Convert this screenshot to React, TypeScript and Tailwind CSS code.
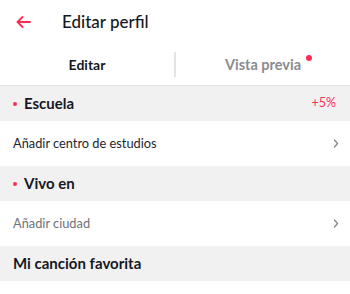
function Chevron() {
  return (
    <svg width="6" height="9" viewBox="0 0 6 9" className="ml-auto mr-[-2px]" fill="none" stroke="#8a8b91" strokeWidth="1.4" strokeLinecap="round" strokeLinejoin="round">
      <path d="M1.5 1l3 3.5-3 3.5" />
    </svg>
  )
}

function SectionHeader({ title, dot, extra }: { title: string; dot?: boolean; extra?: string }) {
  return (
    <div className="h-[35px] bg-[#f1f1f2] flex items-center px-[13px]">
      {dot && <span className="w-[4px] h-[4px] rounded-full bg-[#fe2c55] mr-[7px]" />}
      <span className="text-[15px] font-bold text-[#161823]">{title}</span>
      {extra && <span className="ml-auto text-[12.5px] text-[#fe2c55] mr-[1px]">{extra}</span>}
    </div>
  )
}

function Row({ label, muted }: { label: string; muted?: boolean }) {
  return (
    <div className="h-[45px] bg-white flex items-center px-[13px]">
      <span className={muted ? 'text-[12.8px] text-[#6f7179]' : 'text-[12.8px] text-[#24252d]'}>{label}</span>
      <Chevron />
    </div>
  )
}

export default function App() {
  return (
    <div className="w-[350px] h-[294px] bg-white overflow-hidden" style={{ fontFamily: 'Lato, "Noto Sans", sans-serif' }}>
      <div className="h-[44px] flex items-center">
        <svg width="15" height="12" viewBox="0 0 15 12" className="ml-[16px]" fill="none" stroke="#fe2c55" strokeWidth="1.8" strokeLinecap="round" strokeLinejoin="round">
          <path d="M14 6H1.5M6.5 1L1.5 6l5 5" />
        </svg>
        <span className="ml-[31px] text-[17px] font-medium text-[#161823]">Editar perfil</span>
      </div>
      <div className="h-[42px] flex items-center border-b border-[#e3e3e4]">
        <div className="flex-1 flex justify-center">
          <span className="text-[14px] font-bold text-[#161823]">Editar</span>
        </div>
        <div className="w-[2px] h-[25px] bg-[#e3e3e4]" />
        <div className="flex-1 flex justify-center">
          <span className="relative text-[14.5px] font-bold text-[#8a8b91]">
            Vista previa
            <span className="absolute -right-[11px] top-[1px] w-[6px] h-[6px] rounded-full bg-[#fe2c55]" />
          </span>
        </div>
      </div>
      <SectionHeader title="Escuela" dot extra="+5%" />
      <Row label="Añadir centro de estudios" />
      <SectionHeader title="Vivo en" dot />
      <Row label="Añadir ciudad" muted />
      <SectionHeader title="Mi canción favorita" />
    </div>
  )
}
